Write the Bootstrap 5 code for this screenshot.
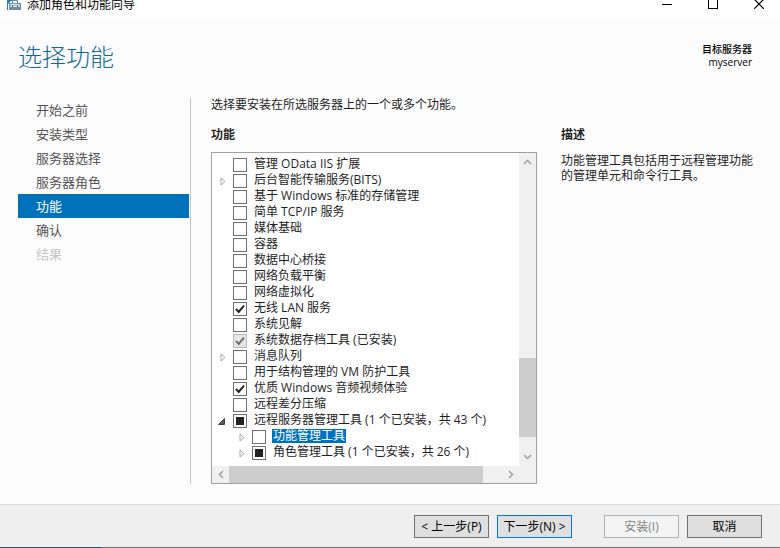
<!DOCTYPE html>
<html lang="zh-CN">
<head>
<meta charset="utf-8">
<meta name="viewport" content="width=device-width, initial-scale=1">
<title>添加角色和功能向导</title>
<link rel="stylesheet" href="https://cdn.jsdelivr.net/npm/bootstrap@5.3.0/dist/css/bootstrap.min.css">
<style>
  body { font-family: "Open Sans", "Noto Sans CJK SC", sans-serif; font-size: 12px; line-height: 16px; color: #1e1e1e; background: #fcfcfc; }
  .titlebar { height: 30px; margin-top: -11px; padding-left: 7px; background: #fff; color: #000; }
  .titlebar-text { padding: 2px 0 0 6px; }
  .caption-buttons { margin-right: -2px; }
  .caption-buttons button { width: 46px; height: 30px; }
  .wizard-head { padding: 24px 28px 0 18px; height: 78px; }
  .wizard-title { font-size: 24px; line-height: 28px; font-weight: 300; color: #0f6a92; }
  .target { font-size: 10px; line-height: 13px; color: #000; }
  .target span { font-weight: 500; }
  .steps { width: 191px; margin-top: 1px; padding: 0 1px 0 18px; border-right: 1px solid #c4c4c4; }
  .steps a { height: 24px; line-height: 24px; padding: 0 18px; font-size: 13px; color: #555; }
  .steps a.active { background: #0072bc; color: #fff; }
  .steps a.disabled { color: #c6c6c6; }
  .features { width: 326px; margin-left: 20px; }
  .heading { font-size: 12px; line-height: 16px; font-weight: 700; margin: 14px 0 9px; }
  .tree-box { border: 1px solid #a0a0a0; background: #fff; }
  .tree { padding: 4px 0 0 4px; }
  .tree-row { height: 16px; }
  .child { padding-left: 19px; }
  .twisty { width: 14px; height: 16px; margin-right: 3px; }
  .tree-row .form-check-input { width: 14px; height: 14px; margin: 0 6px 0 0; border: 1px solid #707070; border-radius: 0; background-color: #fff; background-size: 12px 12px; }
  .tree-row .form-check-input:checked { background-image: url("data:image/svg+xml,%3csvg xmlns='http://www.w3.org/2000/svg' viewBox='0 0 12 12'%3e%3cpath d='M2 5.8l2.7 3.2L10 2.6' fill='none' stroke='%23212121' stroke-width='2'/%3e%3c/svg%3e"); }
  .tree-row .form-check-input:disabled { opacity: 1; border-color: #bcbcbc; background-color: #e6e6e6; background-image: url("data:image/svg+xml,%3csvg xmlns='http://www.w3.org/2000/svg' viewBox='0 0 12 12'%3e%3cpath d='M2 5.8l2.7 3.2L10 2.6' fill='none' stroke='%23707070' stroke-width='2'/%3e%3c/svg%3e"); }
  .tree-row .form-check-input.partial { background-image: url("data:image/svg+xml,%3csvg xmlns='http://www.w3.org/2000/svg' viewBox='0 0 12 12'%3e%3cpath d='M2 2h8v8H2z' fill='%23212121'/%3e%3c/svg%3e"); }
  .tree-row label { line-height: 14px; margin-bottom: 2px; padding: 0 1px; white-space: nowrap; }
  .tree-row .form-check-input:disabled ~ label { opacity: 1; }
  .tree-row label.selected { background: #0072bc; color: #fff; }
  .vbar { width: 17px; background: #f0f0f0; }
  .vbar button { height: 18px; }
  .vthumb { height: 79px; background: #cdcdcd; margin-bottom: 11px; }
  .hbar { height: 17px; margin-right: 17px; background: #f0f0f0; }
  .corner { background: #f0f0f0; }
  .hbar button { width: 17px; }
  .hthumb { width: 254px; background: #cdcdcd; }
  .description { margin: 0 24px; line-height: 15px; }
  .description .heading { margin-bottom: 10px; }
  .wizard-foot { border-top: 1px solid #dadada; background: #efefef; padding: 10px 18px 9px; }
  .bottom-edge { height: 1px; background: linear-gradient(90deg, #1d5a70 13%, #6e6e6e 13%); }
  .btn-win { width: 75px; height: 23px; padding: 0; font-size: 12px; line-height: 21px; border-radius: 0; border: 1px solid #707070; background: #dfdfdf; color: #000; white-space: nowrap; }
  .btn-win.default { border-color: #0078d7; margin: 0 32px 0 8px; }
  .btn-win:disabled { opacity: 1; border-color: #adb2b5; background: #f4f4f4; color: #838383; margin-right: 8px; }
  button.bare { border: 0; padding: 0; background: transparent; display: flex; align-items: center; justify-content: center; flex: none; }
</style>
</head>
<body class="d-flex flex-column vh-100 overflow-hidden">
<header class="titlebar d-flex align-items-center flex-shrink-0">
  <svg width="14" height="16" viewBox="0 0 14 16" aria-hidden="true">
    <path d="M0 0h7v5H4L1 8v6H0z" fill="#1c83c8"/>
    <path d="M2 7h12v7H2z" fill="#6d8ea5"/><path d="M3.500 8h9l.5 1.500H3z" fill="#dbe5ec"/>
    <path d="M5.500 7V4.500h5V7" fill="none" stroke="#6d8ea5"/><path d="M3 10.500h10" stroke="#dbe5ec"/>
    <path d="M5.500 9.500v2M10.500 9.500v2" stroke="#4f6b80"/>
  </svg>
  <span class="titlebar-text">添加角色和功能向导</span>
  <div class="caption-buttons d-flex ms-auto">
    <button class="bare" type="button" aria-label="最小化"><svg width="10" height="11" shape-rendering="crispEdges"><path d="M0 5.500h10" stroke="#000"/></svg></button>
    <button class="bare" type="button" aria-label="最大化"><svg width="10" height="10" shape-rendering="crispEdges"><path d="M.5.5h9v9h-9z" fill="none" stroke="#000"/></svg></button>
    <button class="bare" type="button" aria-label="关闭"><svg width="10" height="10"><path d="M0 0l10 10M10 0L0 10" stroke="#000" stroke-width="1.200"/></svg></button>
  </div>
</header>

<div class="wizard-head d-flex justify-content-between flex-shrink-0">
  <h1 class="wizard-title mb-0">选择功能</h1>
  <div class="target text-end"><span>目标服务器</span><br>myserver</div>
</div>

<main class="d-flex flex-grow-1 pb-3 mb-1">
  <nav class="steps nav flex-column flex-nowrap flex-shrink-0" aria-label="步骤">
    <a class="text-decoration-none" href="#">开始之前</a>
    <a class="text-decoration-none" href="#">安装类型</a>
    <a class="text-decoration-none" href="#">服务器选择</a>
    <a class="text-decoration-none" href="#">服务器角色</a>
    <a class="text-decoration-none active" href="#" aria-current="step">功能</a>
    <a class="text-decoration-none" href="#">确认</a>
    <a class="text-decoration-none disabled" href="#" aria-disabled="true">结果</a>
  </nav>

  <section class="features d-flex flex-column flex-shrink-0">
    <p class="mb-0">选择要安装在所选服务器上的一个或多个功能。</p>
    <h2 class="heading">功能</h2>
    <div class="tree-box d-flex flex-column flex-grow-1">
      <div class="d-flex flex-grow-1">
        <div class="tree flex-grow-1">
          <div class="tree-row d-flex align-items-center"><span class="twisty"></span><input class="form-check-input" type="checkbox" id="f1"><label for="f1">管理 OData IIS 扩展</label></div>
          <div class="tree-row d-flex align-items-center"><button class="bare twisty" type="button" aria-label="展开"><svg width="6" height="9"><path d="M1 1v7l4-3.500z" fill="#fff" stroke="#a6a6a6"/></svg></button><input class="form-check-input" type="checkbox" id="f2"><label for="f2">后台智能传输服务(BITS)</label></div>
          <div class="tree-row d-flex align-items-center"><span class="twisty"></span><input class="form-check-input" type="checkbox" id="f3"><label for="f3">基于 Windows 标准的存储管理</label></div>
          <div class="tree-row d-flex align-items-center"><span class="twisty"></span><input class="form-check-input" type="checkbox" id="f4"><label for="f4">简单 TCP/IP 服务</label></div>
          <div class="tree-row d-flex align-items-center"><span class="twisty"></span><input class="form-check-input" type="checkbox" id="f5"><label for="f5">媒体基础</label></div>
          <div class="tree-row d-flex align-items-center"><span class="twisty"></span><input class="form-check-input" type="checkbox" id="f6"><label for="f6">容器</label></div>
          <div class="tree-row d-flex align-items-center"><span class="twisty"></span><input class="form-check-input" type="checkbox" id="f7"><label for="f7">数据中心桥接</label></div>
          <div class="tree-row d-flex align-items-center"><span class="twisty"></span><input class="form-check-input" type="checkbox" id="f8"><label for="f8">网络负载平衡</label></div>
          <div class="tree-row d-flex align-items-center"><span class="twisty"></span><input class="form-check-input" type="checkbox" id="f9"><label for="f9">网络虚拟化</label></div>
          <div class="tree-row d-flex align-items-center"><span class="twisty"></span><input class="form-check-input" type="checkbox" id="f10" checked><label for="f10">无线 LAN 服务</label></div>
          <div class="tree-row d-flex align-items-center"><span class="twisty"></span><input class="form-check-input" type="checkbox" id="f11"><label for="f11">系统见解</label></div>
          <div class="tree-row d-flex align-items-center"><span class="twisty"></span><input class="form-check-input" type="checkbox" id="f12" checked disabled><label for="f12">系统数据存档工具 (已安装)</label></div>
          <div class="tree-row d-flex align-items-center"><button class="bare twisty" type="button" aria-label="展开"><svg width="6" height="9"><path d="M1 1v7l4-3.500z" fill="#fff" stroke="#a6a6a6"/></svg></button><input class="form-check-input" type="checkbox" id="f13"><label for="f13">消息队列</label></div>
          <div class="tree-row d-flex align-items-center"><span class="twisty"></span><input class="form-check-input" type="checkbox" id="f14"><label for="f14">用于结构管理的 VM 防护工具</label></div>
          <div class="tree-row d-flex align-items-center"><span class="twisty"></span><input class="form-check-input" type="checkbox" id="f15" checked><label for="f15">优质 Windows 音频视频体验</label></div>
          <div class="tree-row d-flex align-items-center"><span class="twisty"></span><input class="form-check-input" type="checkbox" id="f16"><label for="f16">远程差分压缩</label></div>
          <div class="tree-row d-flex align-items-center"><button class="bare twisty" type="button" aria-label="折叠"><svg class="me-1" width="7" height="7"><path d="M6.500.5v6h-6z" fill="#595959" stroke="#404040"/></svg></button><input class="form-check-input partial" type="checkbox" id="f17"><label for="f17">远程服务器管理工具 (1 个已安装，共 43 个)</label></div>
          <div class="tree-row child d-flex align-items-center"><button class="bare twisty" type="button" aria-label="展开"><svg width="6" height="9"><path d="M1 1v7l4-3.500z" fill="#fff" stroke="#a6a6a6"/></svg></button><input class="form-check-input" type="checkbox" id="f18"><label class="selected" for="f18">功能管理工具</label></div>
          <div class="tree-row child d-flex align-items-center"><button class="bare twisty" type="button" aria-label="展开"><svg width="6" height="9"><path d="M1 1v7l4-3.500z" fill="#fff" stroke="#a6a6a6"/></svg></button><input class="form-check-input partial" type="checkbox" id="f19"><label for="f19">角色管理工具 (1 个已安装，共 26 个)</label></div>
        </div>
        <div class="vbar d-flex flex-column flex-shrink-0">
          <button class="bare w-100" type="button" aria-label="向上滚动"><svg width="9" height="6"><path d="M1 5l3.500-3.500L8 5" fill="none" stroke="#a0a0a0" stroke-width="1.500"/></svg></button>
          <div class="vthumb mt-auto"></div>
          <button class="bare w-100" type="button" aria-label="向下滚动"><svg width="9" height="6"><path d="M1 1l3.500 3.500L8 1" fill="none" stroke="#a0a0a0" stroke-width="1.500"/></svg></button>
        </div>
      </div>
      <div class="corner">
        <div class="hbar d-flex">
          <button class="bare" type="button" aria-label="向左滚动"><svg width="6" height="9"><path d="M5 1L1.500 4.500 5 8" fill="none" stroke="#a0a0a0" stroke-width="1.500"/></svg></button>
          <div class="hthumb"></div>
          <button class="bare ms-auto" type="button" aria-label="向右滚动"><svg width="6" height="9"><path d="M1 1l3.500 3.500L1 8" fill="none" stroke="#a0a0a0" stroke-width="1.500"/></svg></button>
        </div>
      </div>
    </div>
  </section>

  <section class="description flex-grow-1 pt-3">
    <h2 class="heading">描述</h2>
    <p class="mb-0">功能管理工具包括用于远程管理功能的管理单元和命令行工具。</p>
  </section>
</main>

<footer class="flex-shrink-0">
  <div class="wizard-foot d-flex justify-content-end">
    <button class="btn btn-win" type="button">&lt; 上一步(P)</button>
    <button class="btn btn-win default" type="button">下一步(N) &gt;</button>
    <button class="btn btn-win" type="button" disabled>安装(I)</button>
    <button class="btn btn-win" type="button">取消</button>
  </div>
  <div class="bottom-edge"></div>
</footer>
<script src="https://cdn.jsdelivr.net/npm/bootstrap@5.3.0/dist/js/bootstrap.bundle.min.js"></script>
</body>
</html>
